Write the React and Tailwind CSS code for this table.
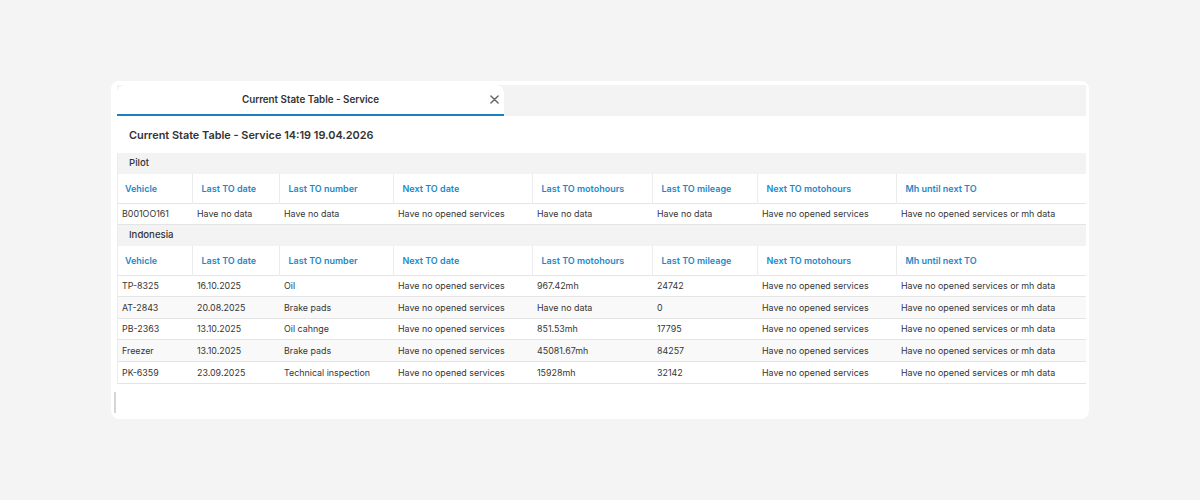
import React from "react";

const cols = [
  { label: "Vehicle", w: 74 },
  { label: "Last TO date", w: 87 },
  { label: "Last TO number", w: 114 },
  { label: "Next TO date", w: 139 },
  { label: "Last TO motohours", w: 120 },
  { label: "Last TO mileage", w: 105 },
  { label: "Next TO motohours", w: 139 },
  { label: "Mh until next TO", w: 190 },
];

const NO = "Have no opened services";
const NOMH = "Have no opened services or mh data";

const groups = [
  {
    name: "Pilot",
    rows: [["B001OO161", "Have no data", "Have no data", NO, "Have no data", "Have no data", NO, NOMH]],
  },
  {
    name: "Indonesia",
    rows: [
      ["TP-8325", "16.10.2025", "Oil", NO, "967.42mh", "24742", NO, NOMH],
      ["AT-2843", "20.08.2025", "Brake pads", NO, "Have no data", "0", NO, NOMH],
      ["PB-2363", "13.10.2025", "Oil cahnge", NO, "851.53mh", "17795", NO, NOMH],
      ["Freezer", "13.10.2025", "Brake pads", NO, "45081.67mh", "84257", NO, NOMH],
      ["PK-6359", "23.09.2025", "Technical inspection", NO, "15928mh", "32142", NO, NOMH],
    ],
  },
];

function Group({ g }) {
  return (
    <div>
      <div className="h-[21px] bg-[#f3f3f3] pl-[11px] flex items-center text-[9.6px] font-medium text-[#333]">
        {g.name}
      </div>
      <table className="table-fixed border-collapse w-full">
        <colgroup>
          {cols.map((c) => (
            <col key={c.label} style={{ width: c.w }} />
          ))}
        </colgroup>
        <thead>
          <tr className="h-[29px] border-b border-[#e6e6e6]">
            {cols.map((c, i) => (
              <th
                key={c.label}
                className={`text-left font-semibold text-[9px] text-[#1e88c8] whitespace-nowrap ${
                  i === 0 ? "pl-[7px]" : "pl-[9px]"
                } ${i < cols.length - 1 ? "border-r border-[#ececec]" : ""}`}
              >
                {c.label}
              </th>
            ))}
          </tr>
        </thead>
        <tbody>
          {g.rows.map((r, ri) => (
            <tr
              key={ri}
              className={`h-[21.6px] border-b border-[#e4e4e4] ${ri % 2 === 1 ? "bg-[#f9f9f9]" : "bg-white"}`}
            >
              {r.map((v, ci) => (
                <td
                  key={ci}
                  className={`${ci === 0 ? "pl-1" : "pl-[5px]"} text-[8.9px] text-[#363636] whitespace-nowrap overflow-hidden`}
                >
                  {v}
                </td>
              ))}
            </tr>
          ))}
        </tbody>
      </table>
    </div>
  );
}

export default function App() {
  return (
    <div
      className="w-[1200px] h-[500px] bg-[#f4f4f5] flex items-center justify-center"
      style={{ fontFamily: "Inter, 'Noto Sans', sans-serif" }}
    >
      <div className="w-[978px] h-[338px] bg-white rounded-lg pt-1 pl-[6px] pr-[3px] flex flex-col">
        <div className="h-[31px] bg-[#f3f3f3] flex shrink-0">
          <div className="w-[387px] bg-white rounded-t-lg border-b-2 border-[#1e7fc0] relative flex items-center justify-center">
            <span className="text-[9.8px] font-semibold text-[#333] mt-[1px]">Current State Table - Service</span>
            <svg
              className="absolute right-[5px] top-[10px]"
              width="9"
              height="9"
              viewBox="0 0 10 10"
              fill="none"
              stroke="#666"
              strokeWidth="1.6"
              strokeLinecap="round"
            >
              <path d="M1 1 L9 9 M9 1 L1 9" />
            </svg>
          </div>
        </div>
        <div className="h-[37px] flex items-center pl-3 text-[10.9px] font-semibold text-[#333] shrink-0 pt-[1px]">
          Current State Table - Service 14:19 19.04.2026
        </div>
        <div className="border-l border-[#ececec]">
          {groups.map((g) => (
            <Group key={g.name} g={g} />
          ))}
        </div>
        <div className="flex-1 flex items-end pb-[6px]">
          <div className="-ml-[3px] w-[2px] h-[21px] bg-[#d6d6d6]" />
        </div>
      </div>
    </div>
  );
}
